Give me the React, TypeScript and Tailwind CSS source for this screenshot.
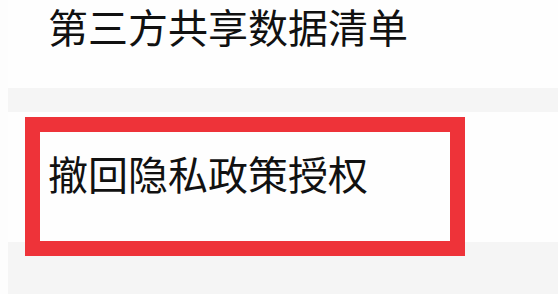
export default function App() {
  return (
    <div
      className="flex h-[294px] w-[558px] overflow-hidden bg-[#f5f5f5]"
      style={{ fontFamily: '"Noto Sans CJK SC", "Noto Sans", sans-serif' }}
    >
      {/* left edge strip */}
      <div className="w-[8px] shrink-0 bg-[#fdfdfd]" />

      <div className="flex flex-1 flex-col">
        {/* previous list item */}
        <div className="h-[88px] bg-[#fefefe] pl-[40px] pt-[2px]">
          <span className="text-[40px] leading-[48px] text-[#111]">第三方共享数据清单</span>
        </div>

        {/* gap between rows */}
        <div className="h-[24px]" />

        {/* highlighted list item */}
        <div className="h-[130px] bg-[#fefefe] pl-[17px] pt-[5px]">
          <div className="h-[139px] w-[440px] border-[15px] border-[#ee3339] bg-[#fefefe] pl-[8px] pt-[17px]">
            <span className="text-[40px] leading-[48px] text-[#111]">撤回隐私政策授权</span>
          </div>
        </div>
      </div>
    </div>
  );
}
